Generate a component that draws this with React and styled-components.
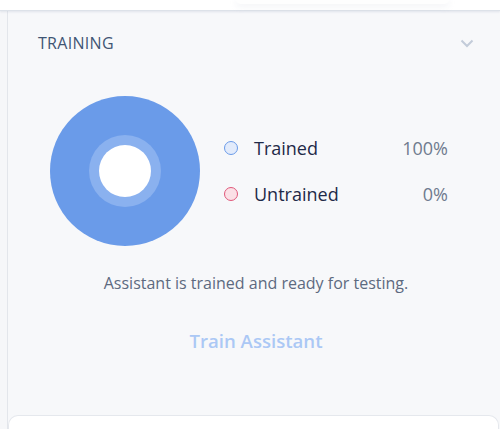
import React from "react";
import styled, { createGlobalStyle } from "styled-components";

const Global = createGlobalStyle`
  html, body { margin: 0; padding: 0; background: #ffffff; }
  body { font-family: "Open Sans", "Noto Sans", sans-serif; width: 500px; height: 429px; overflow: hidden; }
`;

const TopBar = styled.div`
  height: 10px;
  background: #ffffff;
  position: relative;
  border-bottom: 1px solid #dde2e9;
  box-shadow: 0 1px 2px rgba(180, 190, 205, 0.35);
  z-index: 2;
`;

const FloatingShadow = styled.div`
  position: absolute;
  left: 235px;
  right: 50px;
  bottom: 6px;
  height: 6px;
  border-radius: 0 0 12px 12px;
  box-shadow: 0 3px 6px rgba(170, 180, 195, 0.14);
  background: #fefefe;
`;

const Body = styled.div`
  display: flex;
  height: 418px;
`;

const Gutter = styled.div`
  width: 7px;
  background: #f6f7f9;
  border-right: 1px solid #e3e6eb;
`;

const Panel = styled.div`
  flex: 1;
  background: #f7f8fa;
  display: flex;
  flex-direction: column;
`;

const Section = styled.section`
  flex: 1;
  display: flex;
  flex-direction: column;
  padding: 21px 26px 0 30px;
`;

const Header = styled.div`
  display: flex;
  align-items: center;
  justify-content: space-between;
  height: 22px;
`;

const Title = styled.h2`
  margin: 0;
  font-size: 16px;
  font-weight: 400;
  letter-spacing: 0.3px;
  color: #3f5574;
`;

const Chart = styled.div`
  display: flex;
  align-items: center;
  margin-top: 41px;
  margin-left: 12px;
`;

const Legend = styled.div`
  display: flex;
  flex-direction: column;
  gap: 22px;
  margin-left: 22px;
  flex: 1;
  padding-right: 26px;
`;

const LegendRow = styled.div`
  display: flex;
  align-items: center;
  height: 24px;
`;

const Dot = styled.span`
  width: 14px;
  height: 14px;
  border-radius: 50%;
  box-sizing: border-box;
  border: 1.5px solid ${p => p.$stroke};
  background: ${p => p.$fill};
  margin-right: 16px;
`;

const Label = styled.span`
  flex: 1;
  font-size: 18px;
  color: #1f2a48;
`;

const Value = styled.span`
  font-size: 18px;
  color: #6f7b8e;
`;

const Status = styled.p`
  margin: 25px 0 0;
  text-align: center;
  font-size: 16px;
  color: #5d6a80;
`;

const TrainButton = styled.button`
  align-self: center;
  margin-top: 34px;
  border: none;
  background: none;
  font-family: inherit;
  font-size: 18.6px;
  font-weight: 600;
  color: #abc8f5;
  padding: 0;
  cursor: default;
`;

const Card = styled.div`
  height: 13px;
  margin-right: 1px;
  background: #ffffff;
  border: 1px solid #e5e8ed;
  border-bottom: none;
  border-radius: 10px 10px 0 0;
`;

function Donut() {
  return (
    <svg width="152" height="152" viewBox="0 0 152 152">
      <circle cx="75" cy="76" r="75" fill="#6a9be9" />
      <circle cx="75" cy="76" r="36" fill="#8ab1ef" />
      <circle cx="75" cy="76" r="26" fill="#ffffff" />
    </svg>
  );
}

function Chevron() {
  return (
    <svg width="14" height="9" viewBox="0 0 14 9">
      <polyline points="1.5,1.5 7,7 12.5,1.5" fill="none" stroke="#c3ccd9" strokeWidth="2" />
    </svg>
  );
}

export default function App() {
  return (
    <>
      <Global />
      <TopBar>
        <FloatingShadow />
      </TopBar>
      <Body>
        <Gutter />
        <Panel>
          <Section>
            <Header>
              <Title>TRAINING</Title>
              <Chevron />
            </Header>
            <Chart>
              <Donut />
              <Legend>
                <LegendRow>
                  <Dot $stroke="#6a9be9" $fill="#e2ebfb" />
                  <Label>Trained</Label>
                  <Value>100%</Value>
                </LegendRow>
                <LegendRow>
                  <Dot $stroke="#e0587a" $fill="#fbe0e6" />
                  <Label>Untrained</Label>
                  <Value>0%</Value>
                </LegendRow>
              </Legend>
            </Chart>
            <Status>Assistant is trained and ready for testing.</Status>
            <TrainButton>Train Assistant</TrainButton>
          </Section>
          <Card />
        </Panel>
      </Body>
    </>
  );
}
